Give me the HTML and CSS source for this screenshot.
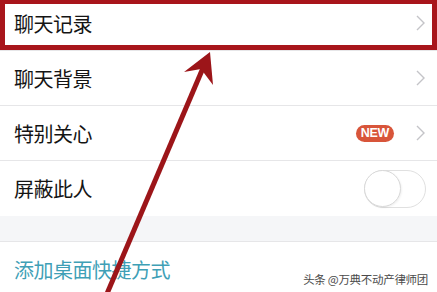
FILE: index.html
```html
<!DOCTYPE html>
<html lang="zh">
<head>
<meta charset="utf-8">
<link rel="stylesheet" href="styles.css">
</head>
<body>
<div class="screen">
  <div class="list">
    <div class="row"><span class="label">聊天记录</span><span class="right"><svg class="chev" viewBox="0 0 9 16"><path d="M1 1 L8 8 L1 15" fill="none" stroke="#c4c4c8" stroke-width="1.4"/></svg></span></div>
    <div class="row"><span class="label">聊天背景</span><span class="right"><svg class="chev" viewBox="0 0 9 16"><path d="M1 1 L8 8 L1 15" fill="none" stroke="#c4c4c8" stroke-width="1.4"/></svg></span></div>
    <div class="row"><span class="label">特别关心</span><span class="right"><span class="badge">NEW</span><svg class="chev" viewBox="0 0 9 16"><path d="M1 1 L8 8 L1 15" fill="none" stroke="#c4c4c8" stroke-width="1.4"/></svg></span></div>
    <div class="row"><span class="label">屏蔽此人</span><span class="right"><span class="toggle"><span class="knob"></span></span></span></div>
  </div>
  <div class="gap"></div>
  <div class="list">
    <div class="row link-row"><span class="label link">添加桌面快捷方式</span></div>
  </div>
  <div class="watermark">头条 @万典不动产律师团</div>
  <div class="highlight"></div>
  <svg class="arrow" width="437" height="292" viewBox="0 0 437 292">
    <line x1="106" y1="296" x2="203" y2="68" stroke="#9c1519" stroke-width="5"/>
    <polygon points="210,52 184,72 201,69 213,85" fill="#9c1519"/>
  </svg>
</div>
</body>
</html>
```
FILE: styles.css
```css
html, body {
  margin: 0;
  padding: 0;
  background: #ffffff;
}
.screen {
  position: relative;
  width: 437px;
  height: 292px;
  overflow: hidden;
  font-family: "Noto Sans CJK SC", "Noto Sans", sans-serif;
  background: #ffffff;
}
.list {
  display: flex;
  flex-direction: column;
  background: #ffffff;
}
.list:first-child {
  margin-top: -4px;
}
.row {
  height: 55px;
  box-sizing: border-box;
  border-bottom: 1px solid #e6e6e8;
  display: flex;
  align-items: center;
  justify-content: space-between;
  padding: 0 12px 0 14px;
}
.list .row:last-child {
  border-bottom: none;
}
.label {
  font-size: 20px;
  color: #141414;
  letter-spacing: -0.5px;
}
.link {
  color: #3f9fb6;
}
.right {
  display: flex;
  align-items: center;
  gap: 22px;
}
.chev {
  width: 9px;
  height: 16px;
  display: block;
}
.badge {
  display: flex;
  align-items: center;
  justify-content: center;
  width: 38px;
  height: 17px;
  border-radius: 9px;
  background: #d8553a;
  color: #ffffff;
  font-family: "Liberation Sans", Arial, sans-serif;
  font-size: 12.5px;
  font-weight: 700;
  letter-spacing: -0.3px;
}
.toggle {
  display: block;
  width: 62px;
  height: 38px;
  box-sizing: border-box;
  border: 1.5px solid #e0e0e0;
  border-radius: 19px;
  background: #ffffff;
  position: relative;
  margin-right: -1px;
}
.knob {
  position: absolute;
  left: -1px;
  top: -1px;
  width: 37px;
  height: 37px;
  box-sizing: border-box;
  border-radius: 50%;
  border: 1.5px solid #d8d8d8;
  background: #ffffff;
  box-shadow: 1px 1px 2px rgba(0,0,0,0.06);
}
.gap {
  height: 25px;
  background: #f5f6f8;
  border-bottom: 1px solid #e6e6e8;
}
.watermark {
  position: absolute;
  right: 9px;
  top: 271px;
  font-size: 11.5px;
  color: #4a4a4a;
  letter-spacing: -0.3px;
}
.highlight {
  position: absolute;
  left: 0;
  top: 0;
  width: 437px;
  height: 50px;
  box-sizing: border-box;
  border: 5px solid #a8151b;
  border-top-width: 4px;
}
.arrow {
  position: absolute;
  left: 0;
  top: 0;
}
```
